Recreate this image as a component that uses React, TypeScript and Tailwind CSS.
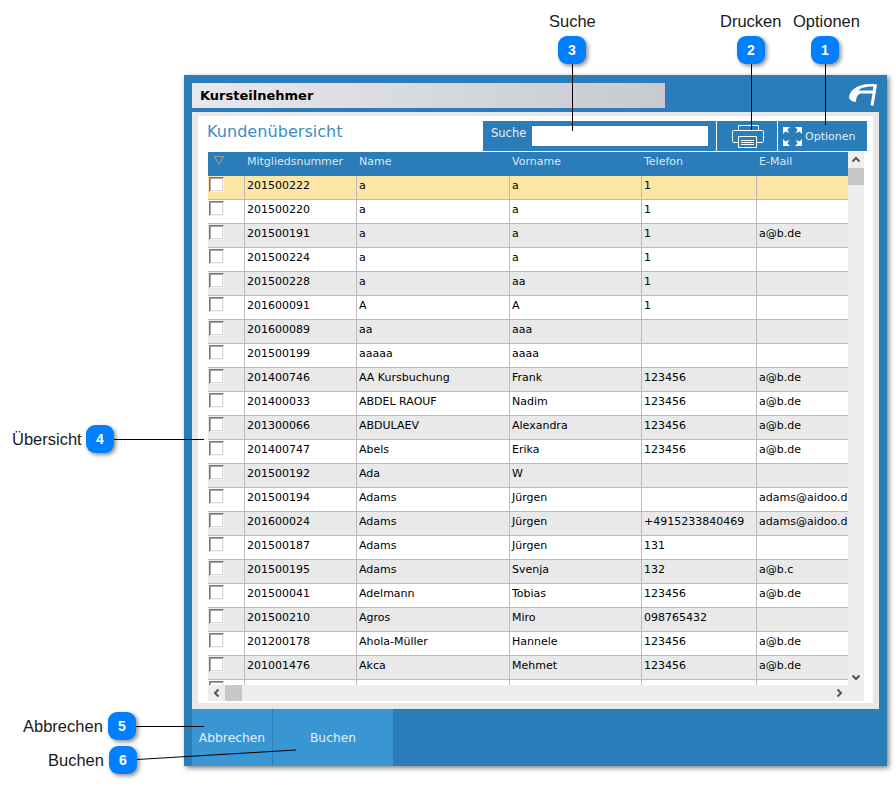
const rows = [
  ['201500222', 'a', 'a', '1', ''],
  ['201500220', 'a', 'a', '1', ''],
  ['201500191', 'a', 'a', '1', 'a@b.de'],
  ['201500224', 'a', 'a', '1', ''],
  ['201500228', 'a', 'aa', '1', ''],
  ['201600091', 'A', 'A', '1', ''],
  ['201600089', 'aa', 'aaa', '', ''],
  ['201500199', 'aaaaa', 'aaaa', '', ''],
  ['201400746', 'AA Kursbuchung', 'Frank', '123456', 'a@b.de'],
  ['201400033', 'ABDEL RAOUF', 'Nadim', '123456', 'a@b.de'],
  ['201300066', 'ABDULAEV', 'Alexandra', '123456', 'a@b.de'],
  ['201400747', 'Abels', 'Erika', '123456', 'a@b.de'],
  ['201500192', 'Ada', 'W', '', ''],
  ['201500194', 'Adams', 'Jürgen', '', 'adams@aidoo.de'],
  ['201600024', 'Adams', 'Jürgen', '+4915233840469', 'adams@aidoo.de'],
  ['201500187', 'Adams', 'Jürgen', '131', ''],
  ['201500195', 'Adams', 'Svenja', '132', 'a@b.c'],
  ['201500041', 'Adelmann', 'Tobias', '123456', 'a@b.de'],
  ['201500210', 'Agros', 'Miro', '098765432', ''],
  ['201200178', 'Ahola-Müller', 'Hannele', '123456', 'a@b.de'],
  ['201001476', 'Akca', 'Mehmet', '123456', 'a@b.de'],
  ['', '', '', '', ''],
];

const cols = 'grid grid-cols-[37px_112px_153px_132px_115px_91px]';

function Checkbox() {
  return (
    <span className="block w-[15px] h-[15px] ml-px mt-px border border-t-[#777] border-l-[#777] border-r-[#f4f4f4] border-b-[#f4f4f4] bg-white shadow-[inset_1px_1px_0_#a8a8a8,inset_-1px_-1px_0_#dcdcdc]" />
  );
}

function Callout({ n, className }: { n: number; className: string }) {
  return (
    <div
      className={`absolute w-[28px] h-[28px] rounded-[9px] bg-[#007fff] text-white text-[14px] font-bold flex items-center justify-center shadow-[2px_2px_4px_rgba(0,0,0,0.45)] ${className}`}
    >
      {n}
    </div>
  );
}

function Label({ text, className }: { text: string; className: string }) {
  return <div className={`absolute text-[16.5px] leading-[18px] text-[#1a1a1a] whitespace-nowrap ${className}`}>{text}</div>;
}

function Logo() {
  return (
    <svg width="30" height="26" viewBox="0 0 30 26" fill="none">
      <path
        d="M1 15C2 7 12 2 21 2C24 2 27 2 29 2.5L25.5 24L22.5 23L24.5 11.5L13 11.5C10 12 8 15 8 20C4.5 19.5 1 18 1 15ZM10.5 8.5L24.8 8.5L25.3 4.5C18 4.5 13 5.5 10.5 8.5Z"
        fill="white"
        fillRule="evenodd"
      />
    </svg>
  );
}

function PrinterIcon() {
  return (
    <svg width="32" height="23" viewBox="0 0 32 23" fill="none" stroke="white" strokeWidth="1">
      <path d="M6.5 5.5V0.5H26.5V5.5" />
      <path d="M6.5 17.5H2C1 17.5 0.5 17 0.5 16V7C0.5 6 1 5.5 2 5.5H30C31 5.5 31.5 6 31.5 7V16C31.5 17 31 17.5 30 17.5H24.5" />
      <path d="M6.5 11.5H24.5V22.5H6.5Z" fill="#2a7db8" />
      <path d="M9 15.5H22M9 17.5H22M9 19.5H22" />
    </svg>
  );
}

function ExpandIcon() {
  return (
    <svg width="19" height="19" viewBox="0 0 19 19" fill="white">
      <path d="M0 0H7L4.5 2.5L6 6L2.5 4.5L0 7Z" />
      <path d="M19 0H12L14.5 2.5L13 6L16.5 4.5L19 7Z" />
      <path d="M0 19V12L2.5 14.5L6 13L4.5 16.5L7 19Z" />
      <path d="M19 19V12L16.5 14.5L13 13L14.5 16.5L12 19Z" />
    </svg>
  );
}

function Chevron({ dir }: { dir: 'up' | 'down' | 'left' | 'right' }) {
  const d = {
    up: 'M1.5 6.5L5 3L8.5 6.5',
    down: 'M1.5 3.5L5 7L8.5 3.5',
    left: 'M6.5 1.5L3 5L6.5 8.5',
    right: 'M3.5 1.5L7 5L3.5 8.5',
  }[dir];
  return (
    <svg width="10" height="10" viewBox="0 0 10 10" fill="none" stroke="#555" strokeWidth="2">
      <path d={d} />
    </svg>
  );
}

export default function App() {
  return (
    <div className="relative w-[896px] h-[786px] bg-white pt-[75px] pl-[184px] overflow-hidden font-['Liberation_Sans',sans-serif]">
      {/* Dialog */}
      <div className="w-[703px] h-[691px] bg-[#2a7db8] shadow-[2px_2px_5px_rgba(0,0,0,0.5)] flex flex-col font-['DejaVu_Sans',sans-serif]">
        <div className="flex items-start pt-2 pl-2 h-[33px] shrink-0">
          <div className="w-[473px] h-[25px] bg-gradient-to-r from-[#e8e8ec] to-[#c8c9d1] flex items-center pl-2 text-[13px] font-bold text-black">
            Kursteilnehmer
          </div>
          <div className="ml-auto mr-[9px] -mt-px">
            <Logo />
          </div>
        </div>

        <div className="mt-1 mx-2 w-[687px] h-[597px] shrink-0 bg-[#e8e8e8] px-[6px] py-1">
          <div className="h-[587px] bg-white pl-[10px] flex flex-col">
            {/* Toolbar */}
            <div className="h-[35px] shrink-0 flex items-end justify-between pr-[6px]">
              <div className="text-[16.1px] leading-[20px] text-[#3b8cc7] -ml-px mb-[9px]">Kundenübersicht</div>
              <div className="flex h-[30px] gap-px text-[11px] text-[#e4eff7]">
                <div className="w-[233px] bg-[#2a7db8] flex items-center pl-2 gap-[6px]">
                  <span className="-mt-[4px] text-[11.5px]">Suche</span>
                  <input className="w-[176px] h-[20px] bg-white" />
                </div>
                <div className="w-[60px] bg-[#2a7db8] flex items-center justify-center pl-px">
                  <PrinterIcon />
                </div>
                <div className="w-[89px] bg-[#2a7db8] flex items-center pl-[5px] gap-[3px]">
                  <ExpandIcon />
                  <span className="text-[11px] mt-[2px]">Optionen</span>
                </div>
              </div>
            </div>

            {/* Table */}
            <div className="mt-px w-[656px] h-[549px] shrink-0 flex flex-col text-[11px] leading-[14px]">
              <div className="flex h-[533px]">
                <div className="w-[640px] h-[533px] overflow-hidden">
                  <div className={`${cols} h-[24px] bg-[#2a7db8] text-[#d9e8f3]`}>
                    <div className="pl-[6px] pt-1">
                      <svg width="10" height="9" viewBox="0 0 10 9" fill="none" stroke="#a3a09c" strokeWidth="1">
                        <path d="M0.5 0.5H9.5L5 8.5Z" />
                      </svg>
                    </div>
                    {['Mitgliedsnummer', 'Name', 'Vorname', 'Telefon', 'E-Mail'].map((h) => (
                      <div key={h} className="pl-[2px] pt-[3px] whitespace-nowrap">{h}</div>
                    ))}
                  </div>
                  {rows.map((r, i) => (
                    <div
                      key={i}
                      className={`${cols} h-[24px] border-b border-[#bbbbbb] text-black ${
                        i === 0 ? 'bg-[#fde6a5]' : i === 21 ? 'bg-white' : i % 2 === 0 ? 'bg-[#e9e9e9]' : 'bg-white'
                      }`}
                    >
                      <div className="border-r border-[#bbbbbb]">
                        <Checkbox />
                      </div>
                      {r.map((c, j) => (
                        <div
                          key={j}
                          className={`pl-[2px] pt-[3px] overflow-hidden whitespace-nowrap ${j < 4 ? 'border-r border-[#bbbbbb]' : ''}`}
                        >
                          {c}
                        </div>
                      ))}
                    </div>
                  ))}
                </div>
                <div className="w-[16px] h-[533px] bg-[#eeeeee] flex flex-col items-center">
                  <div className="h-[16px] flex items-center justify-center"><Chevron dir="up" /></div>
                  <div className="w-[16px] h-[17px] bg-[#c8c8c8]" />
                  <div className="mt-auto h-[16px] flex items-center justify-center"><Chevron dir="down" /></div>
                </div>
              </div>
              <div className="h-[16px] bg-[#eeeeee] flex items-center">
                <div className="w-[17px] flex justify-center"><Chevron dir="left" /></div>
                <div className="w-[17px] h-[16px] bg-[#c8c8c8]" />
                <div className="ml-auto mr-[20px] flex"><Chevron dir="right" /></div>
              </div>
            </div>
          </div>
        </div>

        {/* Footer buttons */}
        <div className="flex flex-1 pl-2 text-[12.3px] leading-[16px] text-[#e4eff7]">
          <div className="w-[80px] bg-[#3a95d3] flex items-center justify-center">Abbrechen</div>
          <div className="w-[120px] ml-px bg-[#3a95d3] flex items-center justify-center">Buchen</div>
        </div>
      </div>

      {/* Leader lines */}
      <svg className="absolute left-0 top-0" width="896" height="786" fill="none" stroke="black" strokeWidth="1">
        <path d="M572.5 64V131" />
        <path d="M751.5 64V130" />
        <path d="M825.5 64V125" />
        <path d="M114 439.5H204" />
        <path d="M136 726.5H204" />
        <path d="M137 759.5L296 750" />
      </svg>

      <Label text="Suche" className="left-[549px] top-[12px]" />
      <Label text="Drucken" className="left-[720px] top-[12px]" />
      <Label text="Optionen" className="left-[793px] top-[12px]" />
      <Label text="Übersicht" className="left-[12px] top-[430px]" />
      <Label text="Abbrechen" className="left-[23px] top-[717px]" />
      <Label text="Buchen" className="left-[48px] top-[751px]" />

      <Callout n={3} className="left-[558px] top-[36px]" />
      <Callout n={2} className="left-[737px] top-[36px]" />
      <Callout n={1} className="left-[811px] top-[36px]" />
      <Callout n={4} className="left-[86px] top-[425px]" />
      <Callout n={5} className="left-[108px] top-[712px]" />
      <Callout n={6} className="left-[109px] top-[746px]" />
    </div>
  );
}
